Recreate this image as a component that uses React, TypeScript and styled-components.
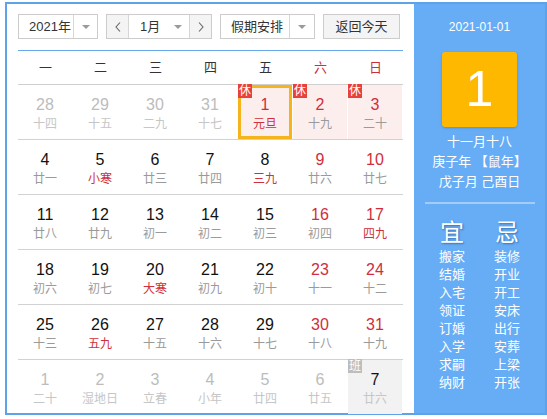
import React from "react";
import styled, { createGlobalStyle } from "styled-components";

const GlobalStyle = createGlobalStyle`
  html, body { margin: 0; padding: 0; background: #fff; }
  body { font-family: "Liberation Sans", "Noto Sans CJK SC", sans-serif; }
  * { box-sizing: border-box; }
`;

type Tone = "normal" | "weekend" | "other";
interface Day {
  n: number;
  lunar: string;
  tone: Tone;
  lunarRed?: boolean;
  badge?: "休" | "班";
  holiday?: boolean;
  selected?: boolean;
  workday?: boolean;
}

const d = (n: number, lunar: string, tone: Tone, extra: Partial<Day> = {}): Day => ({ n, lunar, tone, ...extra });

const weeks: Day[][] = [
  [
    d(28, "十四", "other"), d(29, "十五", "other"), d(30, "二九", "other"), d(31, "十七", "other"),
    d(1, "元旦", "weekend", { lunarRed: true, badge: "休", holiday: true, selected: true }),
    d(2, "十九", "weekend", { badge: "休", holiday: true }),
    d(3, "二十", "weekend", { badge: "休", holiday: true }),
  ],
  [
    d(4, "廿一", "normal"), d(5, "小寒", "normal", { lunarRed: true }), d(6, "廿三", "normal"), d(7, "廿四", "normal"),
    d(8, "三九", "normal", { lunarRed: true }), d(9, "廿六", "weekend"), d(10, "廿七", "weekend"),
  ],
  [
    d(11, "廿八", "normal"), d(12, "廿九", "normal"), d(13, "初一", "normal"), d(14, "初二", "normal"),
    d(15, "初三", "normal"), d(16, "初四", "weekend"), d(17, "四九", "weekend", { lunarRed: true }),
  ],
  [
    d(18, "初六", "normal"), d(19, "初七", "normal"), d(20, "大寒", "normal", { lunarRed: true }), d(21, "初九", "normal"),
    d(22, "初十", "normal"), d(23, "十一", "weekend"), d(24, "十二", "weekend"),
  ],
  [
    d(25, "十三", "normal"), d(26, "五九", "normal", { lunarRed: true }), d(27, "十五", "normal"), d(28, "十六", "normal"),
    d(29, "十七", "normal"), d(30, "十八", "weekend"), d(31, "十九", "weekend"),
  ],
  [
    d(1, "二十", "other"), d(2, "湿地日", "other"), d(3, "立春", "other"), d(4, "小年", "other"),
    d(5, "廿四", "other"), d(6, "廿五", "other"),
    d(7, "廿六", "normal", { badge: "班", workday: true }),
  ],
];

const weekdays = ["一", "二", "三", "四", "五", "六", "日"];
const yi = ["搬家", "结婚", "入宅", "领证", "订婚", "入学", "求嗣", "纳财"];
const ji = ["装修", "开业", "开工", "安床", "出行", "安葬", "上梁", "开张"];

const Widget = styled.div`
  display: flex;
  width: 542px;
  height: 413px;
  margin: 2px 0 0 5px;
  border: 2px solid #5ea3ea;
`;

const LeftPane = styled.div`
  width: 407px;
  padding: 10px 11px 0;
  background: #fff;
`;

const Toolbar = styled.div`
  display: flex;
  height: 25px;
  gap: 8px;
  margin-bottom: 11px;
  font-size: 13px;
  color: #333;
`;

const SelectBox = styled.div<{ $w: number }>`
  display: flex;
  width: ${(p) => p.$w}px;
  height: 25px;
  border: 1px solid #cccccc;
  background: #fff;
`;

const SelectLabel = styled.div<{ $pl: number }>`
  flex: 1;
  padding-left: ${(p) => p.$pl}px;
  line-height: 23px;
  white-space: nowrap;
`;

const ArrowCell = styled.div<{ $sep?: boolean; $w: number }>`
  display: flex;
  align-items: center;
  justify-content: center;
  width: ${(p) => p.$w}px;
  border-left: ${(p) => (p.$sep ? "1px solid #d6d6d6" : "none")};
`;

const Caret = styled.span`
  width: 0;
  height: 0;
  border-left: 4px solid transparent;
  border-right: 4px solid transparent;
  border-top: 4px solid #9a9a9a;
`;

const NavButton = styled.div<{ $side: "l" | "r" }>`
  display: flex;
  align-items: center;
  justify-content: center;
  width: 22px;
  background: #f4f4f4;
  ${(p) => (p.$side === "l" ? "border-right: 1px solid #d6d6d6;" : "border-left: 1px solid #d6d6d6;")}
`;

const ReturnButton = styled.div`
  width: 77px;
  height: 25px;
  border: 1px solid #cccccc;
  background: #f4f4f4;
  text-align: center;
  line-height: 23px;
`;

const WeekHeader = styled.div`
  display: grid;
  grid-template-columns: repeat(7, 55px);
  height: 35px;
  border-top: 1px solid #68a8ea;
  border-bottom: 1px solid #cfcfcf;
`;

const WeekdayLabel = styled.div<{ $red: boolean }>`
  text-align: center;
  line-height: 33px;
  font-size: 13px;
  color: ${(p) => (p.$red ? "#c9303c" : "#333")};
`;

const WeekRow = styled.div<{ $last: boolean }>`
  display: grid;
  grid-template-columns: repeat(7, 55px);
  height: ${(p) => (p.$last ? 54 : 55)}px;
  border-bottom: ${(p) => (p.$last ? "none" : "1px solid #d2d2d2")};
`;

const Cell = styled.div<{ $bg: string; $selected: boolean }>`
  position: relative;
  height: 54px;
  padding-top: 10px;
  text-align: center;
  background: ${(p) => p.$bg};
  box-shadow: ${(p) => (p.$selected ? "inset 0 0 0 3px #f5b41c" : "none")};
  margin-right: 1px;
`;

const DayNum = styled.div<{ $color: string }>`
  font-size: 16px;
  line-height: 20px;
  color: ${(p) => p.$color};
`;

const Lunar = styled.div<{ $color: string }>`
  font-size: 12px;
  line-height: 18px;
  color: ${(p) => p.$color};
  white-space: nowrap;
`;

const Badge = styled.span<{ $kind: "休" | "班" }>`
  position: absolute;
  top: -1px;
  left: 0;
  width: 14px;
  height: 14px;
  font-size: 12px;
  line-height: 14px;
  color: #fff;
  text-align: center;
  background: ${(p) => (p.$kind === "休" ? "#e8413c" : "#bdbdbd")};
`;

const RightPane = styled.div`
  flex: 1;
  background: #66adf6;
  color: #fff;
  text-align: center;
  padding-top: 14px;
`;

const DateText = styled.div`
  font-size: 12px;
  line-height: 18px;
`;

const BigDay = styled.div`
  width: 75px;
  height: 75px;
  margin: 16px auto 5px;
  background: #ffb800;
  border-radius: 3px;
  box-shadow: 0 1px 3px rgba(0, 0, 0, 0.18);
  font-size: 50px;
  line-height: 75px;
  color: #fff;
`;

const LunarLine = styled.div`
  font-size: 13px;
  line-height: 20px;
  white-space: nowrap;
`;

const Divider = styled.div`
  width: 110px;
  height: 2px;
  margin: 10px auto 15px;
  background: #a3cdf6;
`;

const AdviceGrid = styled.div`
  display: grid;
  grid-template-columns: 55px 55px;
  justify-content: center;
`;

const AdviceCol = styled.div`
  display: flex;
  flex-direction: column;
  align-items: center;
`;

const AdviceTitle = styled.div`
  font-size: 24px;
  line-height: 28px;
  margin-bottom: 1px;
  text-shadow: 1px 1px 2px rgba(0, 40, 90, 0.45);
`;

const AdviceItem = styled.div`
  font-size: 13px;
  line-height: 18px;
`;

const Chevron = ({ dir }: { dir: "l" | "r" }) => (
  <svg width="8" height="12" viewBox="0 0 8 12">
    <polyline
      points={dir === "l" ? "6,1.5 2,6 6,10.5" : "2,1.5 6,6 2,10.5"}
      fill="none"
      stroke="#666"
      strokeWidth="1.1"
    />
  </svg>
);

const numColor = (day: Day) => {
  if (day.tone === "other") return "#bcbcbc";
  if (day.tone === "weekend") return "#d02e3c";
  return "#111";
};

const lunarColor = (day: Day) => {
  if (day.tone === "other" || day.workday) return "#c6c6c6";
  if (day.lunarRed) return "#d0303a";
  return "#9a9a9a";
};

const cellBg = (day: Day) => {
  if (day.holiday) return "#fdeeee";
  if (day.workday) return "#f2f2f2";
  return "transparent";
};

export default function App() {
  return (
    <>
      <GlobalStyle />
      <Widget>
        <LeftPane>
          <Toolbar>
            <SelectBox $w={80}>
              <SelectLabel $pl={10}>2021年</SelectLabel>
              <ArrowCell $sep $w={24}>
                <Caret />
              </ArrowCell>
            </SelectBox>
            <SelectBox $w={106}>
              <NavButton $side="l">
                <Chevron dir="l" />
              </NavButton>
              <SelectLabel $pl={11}>1月</SelectLabel>
              <ArrowCell $w={22}>
                <Caret />
              </ArrowCell>
              <NavButton $side="r">
                <Chevron dir="r" />
              </NavButton>
            </SelectBox>
            <SelectBox $w={95}>
              <SelectLabel $pl={10}>假期安排</SelectLabel>
              <ArrowCell $sep $w={25}>
                <Caret />
              </ArrowCell>
            </SelectBox>
            <ReturnButton>返回今天</ReturnButton>
          </Toolbar>
          <WeekHeader>
            {weekdays.map((w, i) => (
              <WeekdayLabel key={w} $red={i >= 5}>
                {w}
              </WeekdayLabel>
            ))}
          </WeekHeader>
          {weeks.map((week, wi) => (
            <WeekRow key={wi} $last={wi === weeks.length - 1}>
              {week.map((day, di) => (
                <Cell key={di} $bg={cellBg(day)} $selected={!!day.selected}>
                  {day.badge && <Badge $kind={day.badge}>{day.badge}</Badge>}
                  <DayNum $color={numColor(day)}>{day.n}</DayNum>
                  <Lunar $color={lunarColor(day)}>{day.lunar}</Lunar>
                </Cell>
              ))}
            </WeekRow>
          ))}
        </LeftPane>
        <RightPane>
          <DateText>2021-01-01</DateText>
          <BigDay>1</BigDay>
          <LunarLine>十一月十八</LunarLine>
          <LunarLine>庚子年 【鼠年】</LunarLine>
          <LunarLine>戊子月 己酉日</LunarLine>
          <Divider />
          <AdviceGrid>
            <AdviceCol>
              <AdviceTitle>宜</AdviceTitle>
              {yi.map((t) => (
                <AdviceItem key={t}>{t}</AdviceItem>
              ))}
            </AdviceCol>
            <AdviceCol>
              <AdviceTitle>忌</AdviceTitle>
              {ji.map((t) => (
                <AdviceItem key={t}>{t}</AdviceItem>
              ))}
            </AdviceCol>
          </AdviceGrid>
        </RightPane>
      </Widget>
    </>
  );
}
